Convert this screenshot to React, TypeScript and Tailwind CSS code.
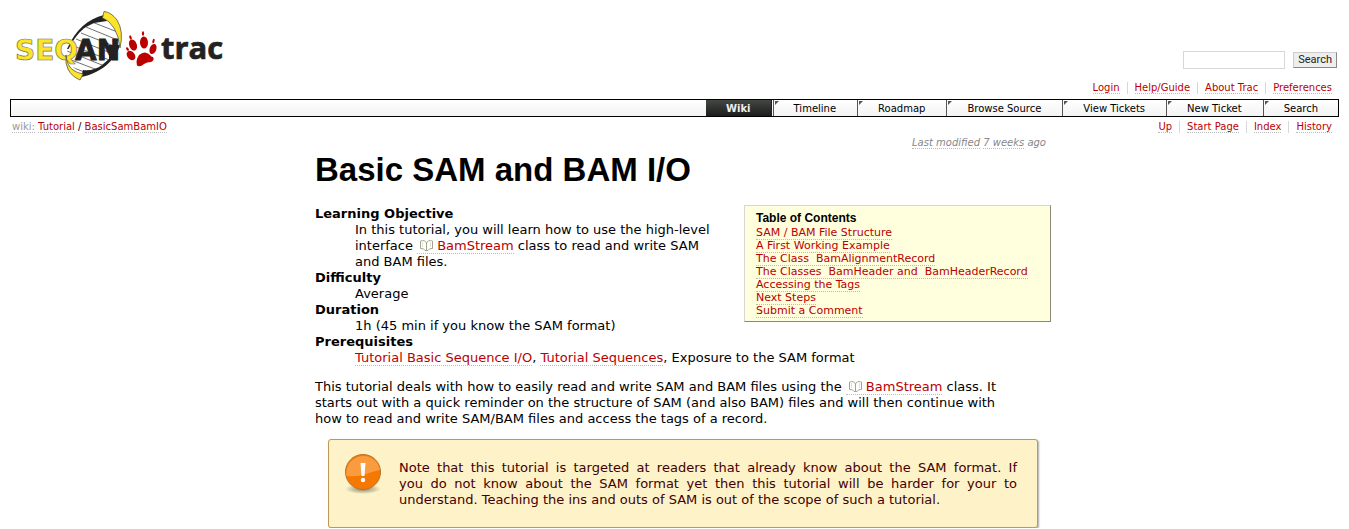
import type { ReactNode } from 'react';

const linkBase = 'border-b border-dotted border-[#bbb] text-[#b00]';

function Link({ children }: { children: ReactNode }) {
  return <a href="#" className={linkBase}>{children}</a>;
}

function Logo() {
  return (
    <svg width="214" height="74" viewBox="0 0 214 74" role="img" aria-label="SeqAn Trac">
      <defs>
        <clipPath id="helix"><path d="M94 6Q72 12 58 38Q55 50 62 57L72 66Q98 62 109 38Q110 18 94 6Z" /></clipPath>
      </defs>
      <path d="M94 6Q72 12 58 38Q55 50 62 57L72 66Q98 62 109 38Q110 18 94 6Z" fill="#fff" />
      <g stroke="#333" strokeWidth="0.7" clipPath="url(#helix)">
        <path d="M82 13l28 11M76 18l34 14M71 24l38 15M66 30l42 17M61 36l46 18M57 42l50 20M56 49l50 19M56 56l42 16" />
      </g>
      <path d="M94 6C78 10 66 20 57 40L58.500 40C65 28 70 22 76 18L84 14L97 12Z" fill="#222" />
      <path d="M110 36C105 52 91 64 71 68L73 61C80 62 87 60 92 56L99 50V36Z" fill="#222" />
      <path d="M94 2.500Q101 3 107 11Q114 22 110 39Q109 27 104 19Q99 11 92.500 9Z" fill="#fde428" stroke="#554" strokeWidth="0.8" />
      <text x="5" y="51" fontFamily="DejaVu Sans, sans-serif" fontWeight="700" fontSize="28" fill="#fde428" stroke="#776" strokeWidth="0.7">SEQ</text>
      <path d="M56 46Q57 57 63 61Q67 64 73 65L70 71Q61 67 58 60Q55 55 56 46Z" fill="#fde428" stroke="#554" strokeWidth="0.8" />
      <text x="65" y="51" fontFamily="DejaVu Sans, sans-serif" fontWeight="700" fontSize="28" fill="#222" stroke="#222" strokeWidth="0.8">AN</text>
      <g fill="#b00">
        <ellipse cx="123" cy="36" rx="3.800" ry="5.800" transform="rotate(-20 123 36)" />
        <ellipse cx="134" cy="33.500" rx="4" ry="6" transform="rotate(-3 134 33.500)" />
        <ellipse cx="143" cy="40" rx="3.300" ry="5.200" transform="rotate(20 143 40)" />
        <ellipse cx="121" cy="46.500" rx="3.800" ry="5.200" transform="rotate(-38 121 46.500)" />
        <ellipse cx="120.500" cy="28.500" rx="1.100" ry="2.200" transform="rotate(-20 120.500 28.500)" />
        <ellipse cx="133" cy="24.500" rx="1.100" ry="2.200" />
        <ellipse cx="143.500" cy="32" rx="1.100" ry="2.200" transform="rotate(15 143.500 32)" />
        <ellipse cx="117.500" cy="40" rx="1.100" ry="2" transform="rotate(-35 117.500 40)" />
        <path d="M129 46Q135 41 140 46Q141 48 143 48Q145 51 141 53Q137 53 134 55Q130 58.500 127 56.500Q126 53 127 50Z" />
      </g>
      <text x="151" y="50" fontFamily="Open Sans, sans-serif" fontWeight="700" fontSize="31" fill="#222" stroke="#222" strokeWidth="0.7">trac</text>
    </svg>
  );
}

function BookIcon() {
  return (
    <svg className="mr-1 ml-[3px] inline-block align-[-1px]" width="13" height="11" viewBox="0 0 13 11" fill="none" stroke="#a3a68f" aria-hidden="true">
      <path d="M.5 1Q5 -.5 6.500 3Q8 -.5 12.500 1V8.500Q9 8 8 10.500H5Q4 8 .5 8.500ZM6.500 3V10" />
      <path d="M2.500 2V7M10.500 2V7" strokeOpacity=".35" />
    </svg>
  );
}

function ClassLink() {
  return <a href="#" className={linkBase}><BookIcon />BamStream</a>;
}

function WarningIcon() {
  return (
    <svg width="38" height="42" viewBox="0 0 38 42" className="shrink-0" aria-hidden="true">
      <defs>
        <radialGradient id="shade"><stop offset="0" stopColor="#665" stopOpacity=".8" /><stop offset="1" stopColor="#665" stopOpacity="0" /></radialGradient>
      </defs>
      <ellipse cx="18" cy="36" rx="18" ry="5" fill="url(#shade)" />
      <circle cx="18" cy="19" r="17.500" fill="#f57900" stroke="#b9722c" />
      <path d="M1.500 23A17 17 0 1 1 35 17Q30 18 24 20Q14 24 1.500 23Z" fill="#f99b3e" />
      <path d="M15.500 10h5l-1 13h-3Z" fill="#fff" />
      <circle cx="18" cy="27" r="2.200" fill="#fff" />
    </svg>
  );
}

function MiniNav({ items, label }: { items: string[]; label: string }) {
  return (
    <nav aria-label={label}>
      <ul className="flex text-[10px] leading-3">
        {items.map((item) => (
          <li key={item} className="border-l border-[#d7d7d7] px-[7px] first:border-l-0">
            <a href="#" className={linkBase}>{item}</a>
          </li>
        ))}
      </ul>
    </nav>
  );
}

const tabs = ['Timeline', 'Roadmap', 'Browse Source', 'View Tickets', 'New Ticket', 'Search'];
const contents = [
  'SAM / BAM File Structure',
  'A First Working Example',
  'The Class \u00a0BamAlignmentRecord',
  'The Classes \u00a0BamHeader and \u00a0BamHeaderRecord',
  'Accessing the Tags',
  'Next Steps',
  'Submit a Comment',
];

export default function App() {
  return (
    <div className="bg-white px-[10px] pt-2 font-['Verdana','DejaVu_Sans',sans-serif] text-[13px] leading-4 text-black">
      <header className="flex items-start justify-between">
        <a href="#" className="mt-[1px]"><Logo /></a>
        <div className="flex flex-col items-end pt-[43px]">
          <form className="flex items-center gap-2 pr-[2px]">
            <input type="text" aria-label="Search" className="h-[18px] w-[102px] border border-[#d7d7d7]" />
            <button type="button" className="h-4 border border-t-[#ccc] border-r-[#888] border-b-[#888] border-l-[#ccc] bg-[#eee] px-1 font-['Roboto',sans-serif] text-[11px] leading-[14px] text-[#222]">Search</button>
          </form>
          <div className="mt-[13px]"><MiniNav label="Account" items={['Login', 'Help/Guide', 'About Trac', 'Preferences']} /></div>
        </div>
      </header>

      <nav aria-label="Main" className="mt-[5px] flex justify-end gap-[1px] border border-black bg-linear-to-b from-white to-[#f3f3f3] text-[10px] leading-[15px]">
        <a href="#" className="border-r border-[#222] bg-linear-to-b from-[#454745] to-[#1c1e1c] px-5 pt-[1px] font-bold text-[#eee]">Wiki</a>
        {tabs.map((tab) => (
          <a key={tab} href="#" className="relative border-l border-[#555] px-5 pt-[1px]">
            <svg className="absolute top-[1px] left-[1px]" width="4" height="4" aria-hidden="true"><path d="M0 0h4L0 4Z" fill="#555" /></svg>
            {tab}
          </a>
        ))}
      </nav>

      <div className="mt-1 flex justify-between">
        <div className="pl-[2px] text-[10px] leading-3">
          <a href="#" className="border-b border-dotted border-[#bbb] text-[#999]">wiki:</a> <Link>Tutorial</Link> / <Link>BasicSamBamIO</Link>
        </div>
        <MiniNav label="Page" items={['Up', 'Start Page', 'Index', 'History']} />
      </div>

      <main className="mx-auto max-w-[753px] pl-[17px]">
        <p className="mt-1 pr-[5px] text-right text-[10px] leading-3 text-[#888] italic">
          <a href="#" className="border-b border-dotted border-[#bbb]">Last modified</a> <a href="#" className="border-b border-dotted border-[#bbb]">7 weeks</a> ago
        </p>
        <h1 className="mt-[1px] font-['Liberation_Sans',Arial,sans-serif] text-[33px] leading-10 font-bold">Basic SAM and BAM I/O</h1>
        <nav aria-label="Table of Contents" className="float-right mt-[15px] w-[307px] border border-t-[#d7d7d7] border-r-[#887] border-b-[#887] border-l-[#d7d7d7] bg-[#ffd] px-[11px] pt-[5px] pb-1 text-[11px] leading-[13px]">
          <h2 className="font-['Liberation_Sans',Arial,sans-serif] text-[12px] leading-[15px] font-bold">Table of Contents</h2>
          <ol>{contents.map((item) => <li key={item} className="whitespace-nowrap"><Link>{item}</Link></li>)}</ol>
        </nav>
        <dl className="pt-4">
          <dt className="font-bold">Learning Objective</dt>
          <dd className="pl-10">In this tutorial, you will learn how to use the high-level interface <ClassLink /> class to read and write SAM and{'\u00a0'}BAM{'\u00a0'}files.</dd>
          <dt className="font-bold">Difficulty</dt>
          <dd className="pl-10">Average</dd>
          <dt className="font-bold">Duration</dt>
          <dd className="pl-10">1h (45 min if you know the SAM format)</dd>
          <dt className="font-bold">Prerequisites</dt>
          <dd className="pl-10"><Link>Tutorial Basic Sequence I/O</Link>, <Link>Tutorial Sequences</Link>, Exposure to the SAM format</dd>
        </dl>
        <p className="mt-[13px] pr-8">
          This tutorial deals with how to easily read and write SAM and BAM files using the <ClassLink /> class. It starts out with a quick reminder on the structure of SAM (and also BAM) files and will then continue with how to read and write SAM/BAM files and access the tags of a record.
        </p>
        <aside className="mx-[13px] mt-3 flex items-start gap-4 rounded-[3px] border border-[#c09853] bg-[#fdf2c8] pt-[13px] pr-5 pb-3 pl-4 shadow-[1px_1px_2px_#aaa]">
          <WarningIcon />
          <p className="py-[7px] text-justify text-[#400]">
            Note that this tutorial is targeted at readers that already know about the SAM format. If you{'\u00a0'}do{'\u00a0'}not know about the SAM format yet then this tutorial will be harder for your to understand. Teaching the ins and outs of SAM is out of the scope of such a tutorial.
          </p>
        </aside>
      </main>
    </div>
  );
}
